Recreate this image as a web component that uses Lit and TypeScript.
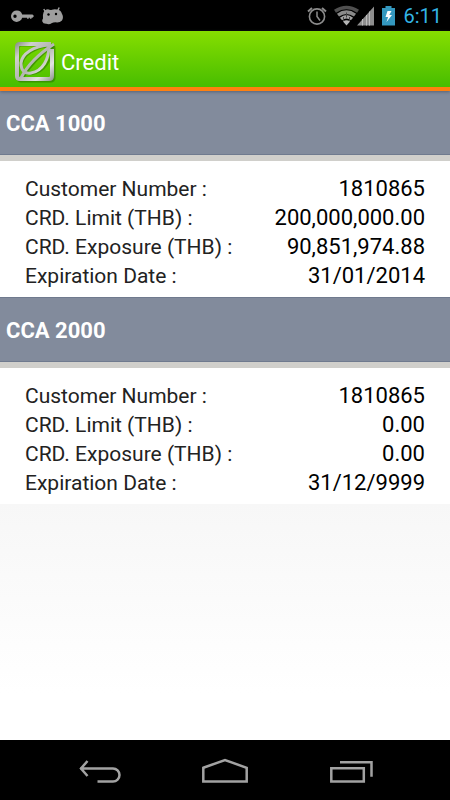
import { LitElement, html, css } from "lit";
import { customElement, property } from "lit/decorators.js";

interface CreditArea {
  title: string;
  rows: [string, string][];
}

const AREAS: CreditArea[] = [
  {
    title: "CCA 1000",
    rows: [
      ["Customer Number :", "1810865"],
      ["CRD. Limit (THB) :", "200,000,000.00"],
      ["CRD. Exposure (THB) :", "90,851,974.88"],
      ["Expiration Date :", "31/01/2014"],
    ],
  },
  {
    title: "CCA 2000",
    rows: [
      ["Customer Number :", "1810865"],
      ["CRD. Limit (THB) :", "0.00"],
      ["CRD. Exposure (THB) :", "0.00"],
      ["Expiration Date :", "31/12/9999"],
    ],
  },
];

@customElement("status-bar")
class StatusBar extends LitElement {
  static styles = css`
    :host {
      display: flex;
      align-items: center;
      height: 31px;
      padding: 0 8px 0 11px;
      background: #000;
      color: #33b5e5;
      font-size: 20px;
      line-height: 29px;
    }
    svg { display: block; flex: none; }
    .left { display: flex; gap: 7px; flex: 1; }
    .right { display: flex; align-items: center; }
    .wifi { margin: 0 -3px 0 7px; }
    .battery { margin: 0 8px 0 7px; }
    time { padding-top: 2px; }
  `;
  render() {
    return html`
      <div class="left">
        <svg width="23" height="24" viewBox="0 0 23 24" fill="#9e9e9e" aria-hidden="true">
          <path fill-rule="evenodd" d="M6 6.500a5.700 5.700 0 0 1 5.200 4h10.300l1.500 1.600-1.500 1.700h-1v1h-1.600v-1h-1.200v1h-1.600v-1h-4.900a5.700 5.700 0 1 1-5.200-7.300zM4 10.500a1.700 1.700 0 1 0 0 3.400 1.700 1.700 0 0 0 0-3.400z"/>
        </svg>
        <svg width="23" height="24" viewBox="0 0 23 24" aria-hidden="true">
          <path d="M4.500 8 2.800 5M16.500 7l1.700-3.500" stroke="#9e9e9e" stroke-width="1.500" fill="none"/>
          <path fill="#9e9e9e" d="M2.500 8.500Q3.500 5.500 7 5.300 9 6.300 11 5.800 13 4.800 16 5.500 20 6 20.800 9.500 23 13 21 16.500 18.500 19 14.500 18.300 12 18.500 11 19 8 21 5.500 19.800 2 20 1.300 17.500 .8 16 2 14.500 1.500 11 2.500 8.500z"/>
          <circle cx="7.500" cy="10.500" r="1.200"/><circle cx="15" cy="10" r="1.200"/>
        </svg>
      </div>
      <div class="right">
        <svg width="20" height="24" viewBox="0 0 20 24" fill="none" stroke="#8c8c8c" aria-hidden="true">
          <circle cx="10" cy="12.500" r="7.600" stroke-width="1.600"/>
          <path d="M10 7.500v5l3 4" stroke-width="1.500"/>
          <path d="M1 7.500 5 4M19 7.500 15 4" stroke-width="2"/>
        </svg>
        <svg class="wifi" width="26" height="24" viewBox="0 0 26 24" fill="none" aria-hidden="true">
          <path d="M1 7.300Q12.500 -.3 24 7.300" stroke="#505050" stroke-width="3.500"/>
          <path d="M4 11.200Q12.500 5 21 11.200" stroke="#8a8a8a" stroke-width="3.500"/>
          <path d="M7 15Q12.500 10.500 18 15" stroke="#a0a0a0" stroke-width="3.500"/>
          <path d="M9 17.500Q12.500 15 16 17.500L12.500 21.500z" fill="#b5b5b5"/>
          <path d="M12.500 8.500v5M9.500 13v4M15.500 13v4" stroke="#444" stroke-width="1"/>
        </svg>
        <svg width="18" height="24" viewBox="0 0 18 24" aria-hidden="true">
          <path d="M0 21.500 17 2.500v19z" fill="#8e8e8e"/>
          <path d="M5.500 15v6.500M9.500 11v10.500M12.500 7.500v14" stroke="#bcbcbc" stroke-width="1"/>
        </svg>
        <svg class="battery" width="13" height="24" viewBox="0 0 13 24" aria-hidden="true">
          <path d="M3.500 2h6v2H13v17.500H0V4h3.500z" fill="#3498bf"/>
          <path d="M5.500 7 3.500 13h2.600L4.500 18l5.500-7H7.300L9.500 7z" fill="#fff"/>
        </svg>
        <time>6:11</time>
      </div>
    `;
  }
}

@customElement("title-bar")
class TitleBar extends LitElement {
  static styles = css`
    :host {
      display: flex;
      align-items: center;
      gap: 5px;
      height: 56px;
      padding-left: 14px;
      border-bottom: 4px solid #ff8010;
      background: linear-gradient(#86de00, #48bd00);
      color: #fff;
      position: relative;
      z-index: 1;
      box-shadow: 0 1px 3px rgba(60, 70, 90, 0.6);
    }
    svg { display: block; margin-top: 6px; }
    h1 {
      margin: 0;
      padding-top: 8px;
      font-size: 22px;
      line-height: 28px;
      font-weight: 400;
    }
  `;
  render() {
    return html`
      <svg width="42" height="42" viewBox="0 0 42 42" fill="none" aria-hidden="true">
        <defs>
          <linearGradient id="metal" gradientUnits="userSpaceOnUse" x1="2" y1="2" x2="40" y2="40">
            <stop offset="0" stop-color="#8b9388"/>
            <stop offset=".2" stop-color="#cfd0cd"/>
            <stop offset=".5" stop-color="#b4b6b2"/>
            <stop offset=".75" stop-color="#e2e2e2"/>
            <stop offset="1" stop-color="#8b9088"/>
          </linearGradient>
        </defs>
        <g stroke="#2c7800" stroke-opacity=".6" transform="translate(1 1)">
          <rect x="3" y="3" width="36" height="36" rx="3" stroke-width="3"/>
          <path d="M37 4C20 5 8 13 7 23C7 30 11 33 17 32C30 30 37 18 37 4" stroke-width="2"/>
          <path d="M8 36C14 26 24 14 39 4" stroke-width="2"/>
        </g>
        <g stroke="url(#metal)">
          <path d="M37 3H6Q3 3 3 6V35Q3 38 6 38H35Q38 38 38 35V8" stroke-width="4"/>
          <path d="M36 4C19 5 8 13 7 22C7 30 11 33 17 32C29 30 35 18 35 4" stroke-width="3"/>
          <path d="M7 37C13 25 23 14 40 3" stroke-width="3"/>
        </g>
      </svg>
      <h1>Credit</h1>
    `;
  }
}

@customElement("credit-section")
class CreditSection extends LitElement {
  @property({ attribute: false }) area!: CreditArea;

  static styles = css`
    :host { display: block; background: #fff; }
    h2 {
      box-sizing: border-box;
      height: 65px;
      margin: 0;
      padding-left: 6px;
      border-top: 1px solid #6f7a8e;
      border-bottom: 1px solid #6f7a8e;
      background: #828b9c;
      color: #fff;
      font-size: 22px;
      line-height: 65px;
      font-weight: 700;
    }
    .body {
      padding: 14px 25px 6px;
      border-top: 6px solid #d0cfcb;
    }
    table { width: 100%; border-collapse: collapse; }
    tr { height: 29px; }
    th, td {
      padding: 0;
      line-height: 28px;
      font-weight: 400;
      white-space: nowrap;
      vertical-align: baseline;
    }
    th { text-align: left; font-size: 21px; color: #222; }
    td { text-align: right; font-size: 22px; color: #000; }
  `;
  render() {
    return html`
      <h2>${this.area.title}</h2>
      <div class="body">
        <table>
          <tbody>
            ${this.area.rows.map(
              ([label, value]) => html`<tr><th scope="row">${label}</th><td>${value}</td></tr>`
            )}
          </tbody>
        </table>
      </div>
    `;
  }
}

@customElement("nav-bar")
class NavBar extends LitElement {
  static styles = css`
    :host {
      display: flex;
      justify-content: center;
      height: 60px;
      background: #000;
    }
    button {
      display: flex;
      flex: 0 1 126px;
      align-items: center;
      justify-content: center;
      padding: 4px 0 0;
      border: 0;
      background: none;
    }
    svg { display: block; fill: none; stroke: #a2a2a2; stroke-width: 2.500; }
  `;
  render() {
    return html`
      <button aria-label="Back">
        <svg width="46" height="28" viewBox="0 0 46 28">
          <path d="M4 10.500h33a6.500 6.500 0 0 1 0 13H21.500M11.500 3 5 10.500 11.500 18"/>
        </svg>
      </button>
      <button aria-label="Home">
        <svg width="46" height="28" viewBox="0 0 46 28">
          <path d="M1.300 9.800 23 2l21.700 7.800v13.700H1.300z"/>
        </svg>
      </button>
      <button aria-label="Recent apps">
        <svg width="46" height="28" viewBox="0 0 46 28">
          <path d="M3.300 10.300h32.500v13.200H3.300zM12 4.300h31.500v14.500"/>
        </svg>
      </button>
    `;
  }
}

@customElement("app-root")
class AppRoot extends LitElement {
  static styles = css`
    :host {
      display: flex;
      flex-direction: column;
      min-height: 100vh;
      font-family: Roboto, sans-serif;
      background: #fff;
    }
    main {
      flex: 1;
      display: flex;
      flex-direction: column;
      margin-top: -1px;
    }
    .rest {
      flex: 1;
      background: linear-gradient(#f7f7f7, #ffffff 80%);
    }
  `;
  render() {
    return html`
      <status-bar></status-bar>
      <title-bar></title-bar>
      <main>
        ${AREAS.map((area) => html`<credit-section .area=${area}></credit-section>`)}
        <div class="rest"></div>
      </main>
      <nav-bar></nav-bar>
    `;
  }
}
